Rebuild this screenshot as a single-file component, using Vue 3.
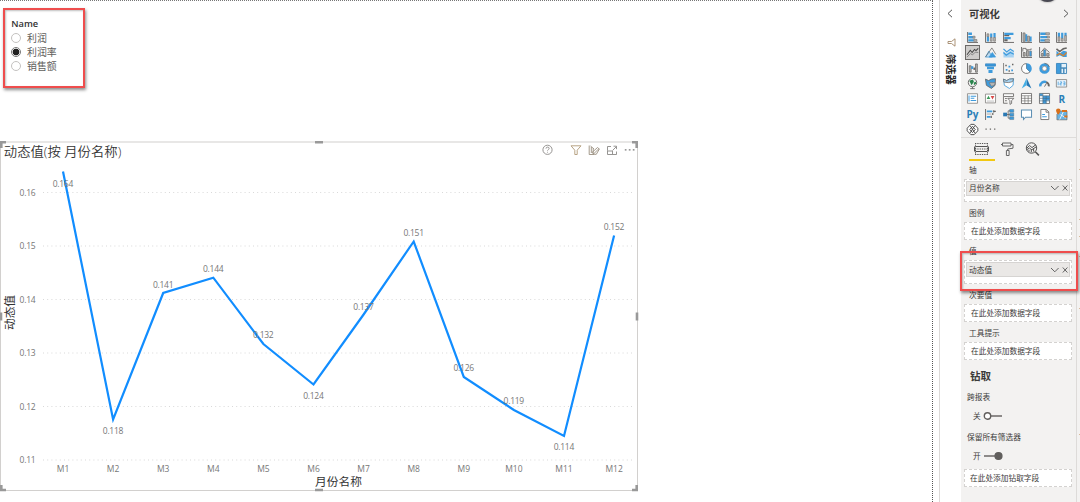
<script setup>
const B = '#3f9bdc'
const G = '#666462'
const L = '#b8b6b4'
const axis = 'M.6 0V11.4H12'

// Each glyph is a list of shapes: [path, fill, stroke, stroke width]
const glyphs = [
  [['M1.4 .6h4v2.6h-4zM1.4 4.4h5v2.6h-5zM1.4 8h6v2.4h-6z', B], ['M6.4 4.6h2.4v2.2H6.4zM7.4 8.2h3.4v2H7.4z', L, G, 0.6], [axis, 'none', G, 1]],
  [['M2 5h2.4v5.4H2zM5.6 1.5h2.4v4.5H5.6zM9.2 1h2.4v5H9.2z', B], ['M2.2 2h2v3h-2zM5.8 6h2v4h-2zM9.4 6h2v4h-2z', L, G, 0.6], [axis, 'none', G, 1]],
  [['M1.4 .8h10v2.6h-10zM1.4 5.4h7v2.4h-7z', B], ['M1.4 3.2h5.4v1.5H1.4zM1.4 7.8H5v2.4H1.4z', G], [axis, 'none', G, 1]],
  [['M4.6 2.5h2.2V10.4H4.6zM9.4 5h2.2v5.4H9.4z', B], ['M2.2 1h2.2v9.2H2.2zM7.2 4.5h2V10.2h-2z', L, G, 0.7], [axis, 'none', G, 1]],
  [['M1.4 .6h6v2.6h-6zM1.4 4.4h7.4v2.4H1.4zM1.4 8h5v2.4h-5z', B], ['M7.4 .8h4v2.2h-4zM8.8 4.6h2.6v2H8.8zM6.4 8.2h5v2h-5z', L, G, 0.6], [axis, 'none', G, 1]],
  [['M2 .8h2.4v4.4H2zM5.6 .8h2.4V7H5.6zM9.2 .8h2.4V4H9.2z', B], ['M2.2 5.2h2V10h-2zM5.8 7h2v3h-2zM9.4 4h2v6h-2z', L, G, 0.6], [axis, 'none', G, 1]],

  [['M0 8.5 3.6 3.6 5.6 6 8.2 2.6 9.8 4 12.3 1.5', 'none', '#444', 1.1], ['M0 11 3.8 7.2 6 8.6 9 5.6 12.3 6', 'none', '#777', 0.9]],
  [['M.5 11 4.2 4.5 8 11z', '#bcdcf3', B, 0.8], ['M4.5 11 8 6 11.5 11z', B, B, 0.8], ['M.5 11 7.5 1 11.8 8', 'none', G, 0.8]],
  [['M.5 4.5 3.5 7 8 4 11.8 6V11.4H.5z', '#a6d2f2'], ['M.5 2 4 5.5 8 2.5 11.8 5M.5 6 3.5 9 8 6 11.8 8', 'none', B, 1.3]],
  [['M2.5 6h2v4h-2zM6 4h2v6H6z', L, G, 0.8], ['M2 5V1.5h3.5V3H11V1.5', 'none', G, 0.9], ['M9.3 4.5h2.2V10H9.3z', B, G, 0.5], [axis, 'none', G, 1]],
  [['M2.5 7h2v3h-2zM8.5 7H11v3H8.5z', L, G, 0.8], ['M5 3h2.4v7H5z', B, G, 0.5], ['M2 6 6 1.2 11.5 6', 'none', G, 0.9], [axis, 'none', G, 1]],
  [['M.5 4 4 7 8 4 11.7 5v6H8L4 9 .5 11z', B], ['M.5 2 4 5 8 2 11.7 1', 'none', G, 1.7], ['M.5 9 4 7 8 9.5 11.7 6', 'none', '#d9822b', 1.2]],

  [['M2.5 3h2v7h-2zM9.3 1h2v9h-2z', L, G, 0.8], ['M4.5 3.5h2.4v3H4.5z', B], ['M7 5h2v2.5H7z', G], [axis, 'none', G, 1]],
  [['M.4.8h11.2v2.8H.4zM2.2 4.2h7.6v2.6H2.2zM3.8 7.6h4.4v3.4H3.8z', B], ['M.6.9h10.8v2.4H.6z', 'none', '#2878b4', 0.6]],
  [['M3 6.5h1.9v1.9H3zM6 3h1.9v1.9H6zM9 7h1.9v1.9H9z', B], ['M2.5 2h1.6v1.6H2.5zM9.8.8h1.6v1.6H9.8zM6 8h1.6v1.6H6z', G], [axis, 'none', G, 0.8]],
  [['M6 .6A5.4 5.4 0 1 0 9.8 9.8L6 6z', '#fff', G, 0.9], ['M6 .4A5.6 5.6 0 0 1 10 10L6 6z', B]],
  [['M6 1.8a4.2 4.2 0 1 0 4.2 4.2A4.2 4.2 0 0 0 6 1.8z', 'none', B, 3], ['M6 .3a5.7 5.7 0 0 1 5.4 4', 'none', G, 0.8], ['M6 3.6A2.4 2.4 0 1 0 8.4 6 2.4 2.4 0 0 0 6 3.6z', '#fff', G, 0.6]],
  [['M.5.5H5v11H.5z', B, '#2878b4', 0.8], ['M5.5.5h6v5h-6zM5.5 5.5h3v6h-3zM8.5 5.5h3v6h-3z', '#e4f1fa', '#3f86b8', 1]],

  [['M6 .4a4.6 4.6 0 1 0 4.6 4.6A4.6 4.6 0 0 0 6 .4z', '#efefef', G, 1], ['M2.5 3l4-1.5 1 2.5-2.5 4zM7.5 5l2.3-1 .2 2-2.5 2z', '#29834b'], ['M6 9.8V11.5M3.5 11.6h5', 'none', G, 1]],
  [['M.5 1.2 4 2.8l3-1.6L11.5.8 11 8 7 11.4 1.5 8z', B, G, 0.9], ['M4.5 5h6.7l-1 3-3.2 1z', L, G, 0.5]],
  [['M.5 1.2 4 2.8l3-1.6L11.5.8 11 8 7 11.4 1.5 8z', '#fff', B, 0.9], ['M.5 1.2 4 2.8l3-1.6 4.5-.4L10.4 4 6 5 1 4.5z', '#a6d2f2', G, 0.8]],
  [['M6.2 0 11.4 11.5 6 8z', '#2878b4'], ['M6.2 0 .8 11.5 6 8z', '#43aee5']],
  [['M1.4 9.2A4.7 4.7 0 0 1 8 4.5', 'none', B, 2.6], ['M8 4.4a4.7 4.7 0 0 1 2.7 4.8', 'none', G, 2], ['M6 9.4 8.2 5.8', 'none', G, 1]],
  [['M.4 1.7h11.2v8.2H.4z', '#eaf3fa', '#858381', 0.9], ['M2.4 4v3.8M4.4 4.2h1.7v1.6H4.4v1.7h1.8M8 4.2h1.8v3.4H8M8 5.9h1.6', 'none', B, 0.8]],

  [['M.5.8h11v10.4H.5z', '#fff', '#858381', 0.9], ['M2.2 2.8v6.4', 'none', B, 1.1], ['M4 3.5h6M4 5.8h4M4 8.2h6', 'none', B, 1.1]],
  [['M.5 1.2h11v9.6H.5z', '#fff', '#858381', 0.9], ['M1.8 6.6 3.8 3 5.8 6.6z', '#3a9a58'], ['M6.2 3.4h4L8.2 7z', '#d94747'], ['M2 8.8h8', 'none', '#aaa', 0.8]],
  [['M.5.8h11v3H.5z', '#fff', G, 0.9], ['M.5 4v7.2H5M2.2 6h2M2.2 8.4h2', 'none', G, 0.9], ['M5.2 5.8h6.6L9.4 8.4V11.4L7.6 12.4V8.4z', '#fff', G, 0.9]],
  [['M.5.5h11v11H.5z', '#fff', G, 0.9], ['M.5 3h11M.5 5.8h11M.5 8.6h11M4.2 3v8.5M7.8 3v8.5', 'none', G, 0.7]],
  [['M.5.5h11v11H.5z', '#fff', G, 0.9], ['M.8 .8H4V3H.8zM4.3 3.2h7.2v5H8v3.3H4.3z', B], ['M.5 3h11M.5 5.8h11M.5 8.6h11M4.2.5v11M7.8 3v8.5', 'none', '#47687f', 0.7]],
  'R',

  'Py',
  [['M2 1.5h6v2H2zM2 7.5h4v2H2z', B], ['M2 5.5h5', 'none', L, 1.3], ['M9.5 1.3v2.4M8.5 4.4v2.2M6.8 7.3v2.4M11.8 2.5H9', 'none', G, 1.3], ['M.6 0V12', 'none', G, 1]],
  [['M.2 4h4.2v4H.2z', '#2878b4'], ['M7.3.5h4.4v3H7.3zM7.3 4.5h4.4v3H7.3zM7.3 8.5h4.4v3H7.3z', B, '#4e6e84', 0.5], ['M4 6h3.5M5.6 2v8H7.5M5.6 2h2', 'none', G, 0.9]],
  [['M.5 1h11v8H5L2.7 11.5V9H.5z', '#fff', '#5a8db2', 1.1]],
  [['M2 .5h6L10.7 3.2v8.3H2z', '#fff', G, 0.9], ['M7.7.5v3h3', 'none', G, 0.9], ['M3.5 6h3M3.5 8.5h5', 'none', B, 1.1]],
  [['M3 2.2h9v9.6H1V6z', '#69b3e4', G, 0.7], ['M8 3 4 11.5M5 6l6 4', 'none', '#fff', 0.9], ['M2.5-.6A2.5 2.5 0 0 1 5 1.9Q4.6 4 2.5 6.2.4 4 0 1.9A2.5 2.5 0 0 1 2.5-.6zM9 7h3.4v2.4H9zM6.5 1.2H12v2H6.5z', '#d8701b']],

  [['M4.2.4h3.6L11.8 4.6v2.8L7.8 11.6H4.2L.2 7.4V4.6z', '#fff', '#444', 1], ['M3.4 1.8 8.8 10M8.6 1.8 3.2 10M3 6l3-3.4L9 6 6 9.4z', 'none', '#444', 1]],
  [['M.5 5h1.4v1.4H.5zM5.2 5h1.4v1.4H5.2zM9.9 5h1.4v1.4H9.9z', G]],
]

const xAt = (i) => 63 + i * 50.1
const yAt = (v) => 192.5 - (v - 0.16) * 5350
const points = [
  [171.5, 183.5, '0.164'], [419.5, 430.7, '0.118'], [293, 284.7, '0.141'],
  [277.7, 268.7, '0.144'], [344, 335, '0.132'], [384.5, 395.7, '0.124'],
  [314.5, 306.5, '0.137'], [241.5, 233, '0.151'], [377, 368.2, '0.126'],
  [410, 401.3, '0.119'], [436, 447.3, '0.114'], [235.5, 227.2, '0.152'],
]
const line = points.map((p, i) => `${xAt(i)},${p[0]}`).join(' ')
const ticks = [0.16, 0.15, 0.14, 0.13, 0.12, 0.11]

const hint = '在此处添加数据字段'
const wells = [
  { label: '轴', field: '月份名称' },
  { label: '图例' },
  { label: '值', field: '动态值' },
  { label: '次要值' },
  { label: '工具提示' },
]
const slicer = ['利润', '利润率', '销售额']
const marks = [69, 149, 169, 219, 236, 256, 308, 434]
</script>

<template>
  <div class="app">
    <main class="canvas">
      <section class="slicer">
        <h4>Name</h4>
        <div v-for="(s, i) in slicer" :key="s" class="option">
          <span class="radio" :class="{ on: i === 1 }"></span>{{ s }}
        </div>
      </section>

      <svg class="chart" width="640" height="354" viewBox="0 139 640 354">
        <rect x=".5" y="142" width="637" height="348.5" fill="#fff" stroke="#d2d0ce" />
        <g fill="none" stroke="#999" stroke-width="2.6">
          <path d="M0 142.3h6M1.3 142v6M632 142.3h6M636.7 142v6M0 490h6M1.3 491v-6M632 490h6M636.7 491v-6M315 142.3h8M315 490h8M1 312.5v8M637 312.5v8" />
        </g>
        <text x="3.8" y="156" class="title" textLength="117.5" lengthAdjust="spacingAndGlyphs">动态值(按 月份名称)</text>
        <g fill="none" stroke="#8b8987" stroke-width=".9">
          <circle cx="547.5" cy="149.8" r="4.6" />
          <path d="M546 148.6q.1-1.5 1.6-1.5t1.5 1.4q0 .7-.8 1.2t-.8 1M547.5 151.8v.8" />
          <path d="M571 145.8h10l-3.8 4.4v4.3h-2.4v-4.3z" stroke="#b09a78" />
          <path d="M589.2 145.5v9h5M591.3 147v6M593.2 148.5v5M590.5 146l3.5 3M593.5 154l5.5-5.5M592 152.5l5.5-5 1.8 1.6-3 5.2h-2z" stroke="#9a8f7f" />
          <path d="M607.5 150.5v-4h3.5M607.5 150.5v4h9v-3M607.5 151h5v3.2M612.5 150.5l3.8-3.8M613.5 146.2h3v3" />
        </g>
        <path d="M624.8 149.2h1.7v1.4h-1.7zM628.8 149.2h1.7v1.4h-1.7zM632.8 149.2h1.7v1.4h-1.7z" fill="#777" />

        <g v-for="t in ticks" :key="t">
          <line x1="43" x2="634" :y1="yAt(t)" :y2="yAt(t)" stroke="#d5d5d5" stroke-width=".9" stroke-dasharray="1 3.2" />
          <text x="19.5" :y="yAt(t) + 3" class="tick" textLength="16.2">{{ t.toFixed(2) }}</text>
        </g>
        <polyline :points="line" fill="none" stroke="#118dff" stroke-width="2.2" stroke-linejoin="miter" />
        <g v-for="(p, i) in points" :key="i">
          <text :x="xAt(i) - 10.3" :y="p[1] + 3.1" class="tick" textLength="20.6">{{ p[2] }}</text>
          <text :x="xAt(i)" y="472" class="tick" text-anchor="middle">M{{ i + 1 }}</text>
        </g>
        <text x="338.5" y="485.8" class="axis" text-anchor="middle">月份名称</text>
        <text transform="translate(13.8 312.5) rotate(-90)" class="axis" text-anchor="middle">动态值</text>
      </svg>
    </main>

    <aside class="filters">
      <svg class="collapse" width="8" height="9" viewBox="0 0 8 9"><path d="M6 .8 2 4.5l4 3.7" /></svg>
      <svg class="funnel" width="9" height="9" viewBox="0 0 9 9"><path d="M8 .8v7.4L4.5 5.5H1v-2h3.5z" fill="#fff" stroke="#a3886a" stroke-width=".9" /></svg>
      <span class="vertical">筛选器</span>
    </aside>

    <aside class="pane">
      <header>
        <h3>可视化</h3>
        <svg width="8" height="9" viewBox="0 0 8 9"><path d="m2 .8 4 3.7-4 3.7" /></svg>
      </header>
      <div class="gallery">
        <div v-for="(g, i) in glyphs" :key="i" class="cell" :class="{ picked: i === 6 }">
          <b v-if="typeof g === 'string'">{{ g }}</b>
          <svg v-else width="11" height="11" viewBox="0 0 12 12">
            <path v-for="(s, k) in g" :key="k" :d="s[0]" :fill="s[1]" :stroke="s[2] || 'none'" :stroke-width="s[3] || 0" />
          </svg>
        </div>
      </div>
      <nav>
        <span class="tab active">
          <svg width="15" height="14" viewBox="0 0 15 14" fill="none" stroke="#555" stroke-width="1">
            <path d="M1.5 4.5h12M1.5 9.5h12M.5 4.5v5M14.5 4.5v5" /><path d="M1 1.5h13M1 12.5h13M1 7h13M1.5 1v12M13.5 1v12" stroke-dasharray="1.3 1" />
          </svg>
        </span>
        <span class="tab">
          <svg width="14" height="14" viewBox="0 0 14 14" fill="none" stroke="#666" stroke-width="1">
            <path d="M2.5 1h8.5v3H2.5zM2.5 2.5H1M11 2.5h2v3.7L7.7 7v1.5M6.4 8.5h2.7v5H6.4z" />
          </svg>
        </span>
        <span class="tab">
          <svg width="15" height="14" viewBox="0 0 15 14" fill="none" stroke="#555" stroke-width="1">
            <circle cx="6.5" cy="6" r="5.2" /><path d="m10.3 9.8 3.6 3.6" stroke-width="1.5" /><path d="m2 6 2.6-2.5L7 5.6l4-3M4 7.8v2M6.3 7v3.3M8.6 6.5v3M1.8 7.7 4.5 6l2.2 1.8L11 5" />
          </svg>
        </span>
      </nav>

      <section v-for="w in wells" :key="w.label" class="group">
        <label>{{ w.label }}</label>
        <div class="well" :class="{ filled: w.field }">
          <div v-if="w.field" class="chip">
            <span>{{ w.field }}</span>
            <svg width="20" height="8" viewBox="0 0 20 8"><path d="m1 2 3.8 3.8L8.6 2M12.8 1.5l4.6 5M17.4 1.5l-4.6 5" /></svg>
          </div>
          <template v-else>{{ hint }}</template>
        </div>
      </section>

      <h2>钻取</h2>
      <p>跨报表</p>
      <div class="toggle"><span>关</span><svg width="32" height="10" viewBox="0 0 32 10"><path d="M8 5h11" /><circle cx="4.5" cy="5" r="3.2" fill="#fff" /></svg></div>
      <p class="keep">保留所有筛选器</p>
      <div class="toggle"><span>开</span><svg width="32" height="10" viewBox="0 0 32 10"><path d="M1 5h11" /><circle cx="15.5" cy="5" r="3.4" fill="#605e5c" /></svg></div>
      <div class="well drill">在此处添加钻取字段</div>
    </aside>

    <aside class="edge"><i v-for="m in marks" :key="m" :style="{ top: m + 'px' }"></i></aside>
    <div class="knob"></div>
    <div class="callout name"></div>
    <div class="callout value"></div>
  </div>
</template>

<style>
body { overflow: hidden; }
</style>

<style scoped>
* { box-sizing: border-box; }
.app {
  position: relative; display: flex; width: 1080px; height: 502px; overflow: hidden;
  background: #fff; color: #3b3a39; font-family: "Open Sans", "Noto Sans CJK SC", sans-serif; font-size: 7.7px;
}
h2, h3, h4, p { margin: 0; }
.canvas {
  display: flex; flex-direction: column; justify-content: space-between; width: 933px; padding-bottom: 9px;
  border-top: 1px dotted #777; border-right: 1px dotted #555;
}
.slicer { padding: 15.5px 0 0 11.3px; }
.slicer h4 { font-size: 9.3px; line-height: 14px; font-weight: 600; color: #333; }
.option { display: flex; align-items: center; height: 14px; gap: 5.8px; font-size: 9.9px; color: #605e5c; }
.radio { width: 10px; height: 10px; border: 1px solid #c4c2c0; border-radius: 50%; background: #fff; }
.radio.on { border-color: #777; background: radial-gradient(circle, #222 0 3px, #fff 3.7px); }
.chart { display: block; flex: none; }
.title { font-size: 13px; fill: #333; font-weight: 350; }
.axis { font-size: 11.7px; fill: #333; }
.tick { font-size: 8.5px; fill: #777; }

.filters {
  display: flex; flex-direction: column; align-items: center; width: 28px;
  background: linear-gradient(90deg, #fff 6px, #dcdad8 6px 7.5px, #fff 7.5px);
}
.collapse { margin: 9px 0 0 6px; }
.funnel { margin: 20px 0 0 9px; }
.collapse path, header svg path { fill: none; stroke: #555; stroke-width: 1; }
.vertical { writing-mode: vertical-rl; text-orientation: sideways; margin: 7px 0 0 8px; font-size: 10.3px; line-height: 14px; font-weight: 700; color: #252423; }

.pane { width: 116px; flex: none; background: #f3f2f1; border-right: 1px solid #dddbd9; }
header { display: flex; align-items: center; justify-content: space-between; height: 27px; padding: 0 6px 0 8px; }
h3 { font-size: 10.3px; line-height: 14px; font-weight: 700; color: #3b3a39; }
.gallery { display: grid; grid-template-columns: repeat(6, 17.9px); grid-auto-rows: 15.3px; margin-top: 3px; padding-left: 2.5px; height: 107px; }
.cell { display: flex; align-items: center; justify-content: center; }
.cell svg { overflow: visible; }
.cell b { font-size: 10px; line-height: 12px; font-weight: 700; color: #2b7fb8; }
.picked { width: 15px; height: 15px; margin-left: 1.5px; background: #cfcdcb; border: 1px solid #6b6967; }
nav { display: flex; height: 24px; padding-left: 8px; border-top: 1px solid #dedcda; }
.tab { display: flex; justify-content: center; width: 25.5px; height: 23px; padding-top: 4px; }
.tab.active { border-bottom: 2.5px solid #f2c811; }

.group { margin-bottom: 5px; }
.group:first-of-type { padding-top: 2.6px; }
label { display: block; height: 12px; margin-bottom: 3px; padding-left: 8px; line-height: 12px; }
.well { height: 18px; margin: 0 4px 0 3px; padding-left: 6px; border: 1px dashed #d4d2d0; background: #fff; line-height: 16px; white-space: nowrap; }
.well.filled { height: 23.8px; padding: 1px 1px 0; }
.chip { display: flex; align-items: center; justify-content: space-between; height: 15px; padding: 0 0 0 2px; border: 1px solid #d6d4d2; background: #eae8e6; }
.chip svg { margin-right: -1px; }
.chip svg path { fill: none; stroke: #555; stroke-width: .9; }
h2 { height: 16px; margin-top: 7.4px; padding-left: 9px; font-size: 10.5px; line-height: 16px; font-weight: 600; color: #3b3a39; }
p { height: 12px; margin-top: 7px; padding-left: 6px; line-height: 12px; }
.toggle { display: flex; align-items: center; height: 10px; margin-top: 8px; padding-left: 12px; gap: 2px; line-height: 10px; }
.toggle path, .toggle circle { stroke: #605e5c; stroke-width: 1.4; }
.keep { margin-top: 10.5px; }
.drill { margin-top: 8px; padding-left: 5px; }

.edge { position: relative; flex: 1; background: #f3f2f1; }
.edge i { position: absolute; right: 0; width: 1px; height: 1px; background: #d9b99a; }
.knob { position: absolute; left: 1036px; top: -21px; width: 23px; height: 23px; border-radius: 50%; background: #484852; box-shadow: 0 0 2px #888; }
.callout { position: absolute; border: 2px solid #ef4d4d; box-shadow: 1px 2px 3px rgba(0, 0, 0, .45), inset 1px 1px 2px rgba(0, 0, 0, .25); }
.callout.name { left: 3px; top: 8px; width: 82px; height: 80px; }
.callout.value { left: 960px; top: 251px; width: 118px; height: 40px; }
</style>
